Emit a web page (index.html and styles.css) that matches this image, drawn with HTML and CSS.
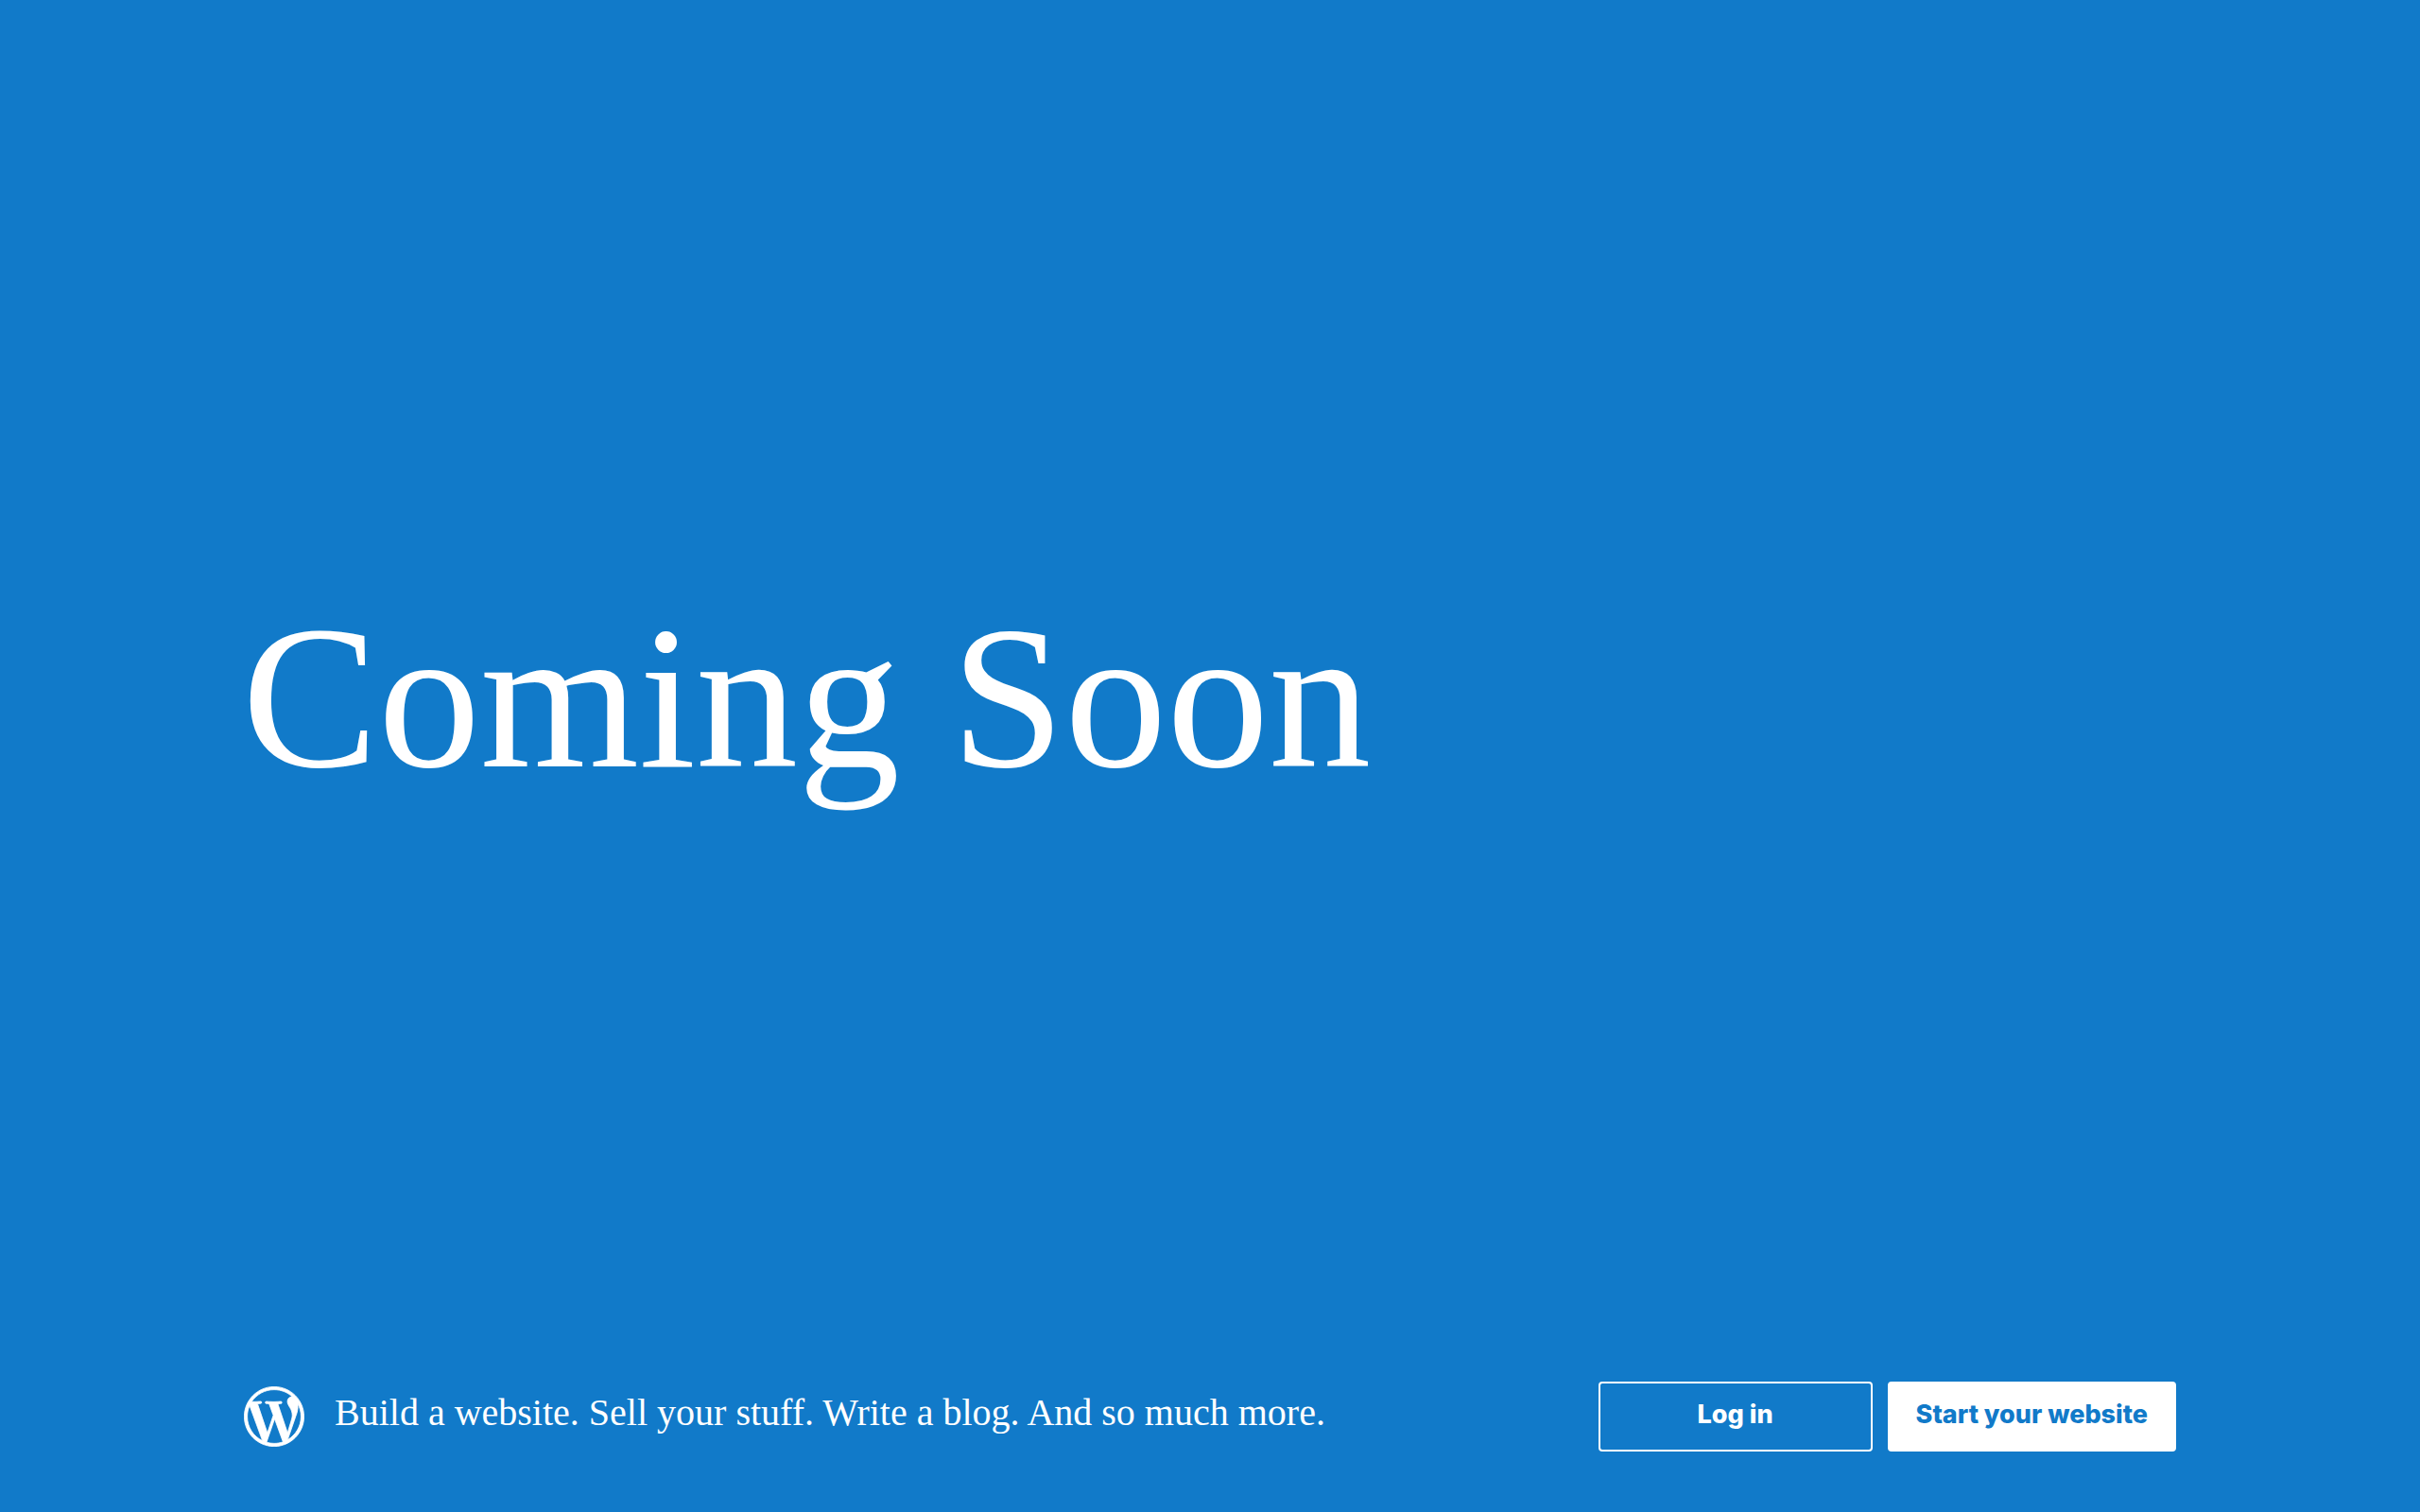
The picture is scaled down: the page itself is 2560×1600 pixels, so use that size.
FILE: index.html
```html
<!DOCTYPE html>
<html lang="en">
<head>
    <meta charset="UTF-8">
    <meta name="viewport" content="width=device-width, initial-scale=1.0">
    <title>Coming Soon</title>
    <link rel="stylesheet" href="styles.css">
</head>
<body>
    <main class="content">
        <h1 class="title">Coming Soon</h1>
    </main>
    <footer class="footer">
        <div class="intro">
            <svg class="logo" viewBox="-0.15 -0.15 24.3 24.3" role="img" aria-label="WordPress">
                <path d="M21.469 6.825c.84 1.537 1.318 3.3 1.318 5.175 0 3.979-2.156 7.456-5.363 9.325l3.295-9.527c.615-1.54.82-2.771.82-3.864 0-.405-.026-.78-.07-1.11m-7.981.105c.647-.03 1.232-.105 1.232-.105.582-.075.514-.93-.067-.899 0 0-1.755.135-2.88.135-1.064 0-2.85-.15-2.85-.15-.585-.03-.661.855-.075.885 0 0 .54.061 1.125.09l1.68 4.605-2.37 7.08L5.354 6.9c.649-.03 1.234-.1 1.234-.1.585-.075.516-.93-.065-.896 0 0-1.746.138-2.874.138-.2 0-.438-.008-.69-.015C4.911 3.15 8.235 1.215 12 1.215c2.809 0 5.365 1.072 7.286 2.833-.046-.003-.091-.009-.141-.009-1.06 0-1.812.923-1.812 1.914 0 .89.513 1.643 1.06 2.531.411.72.89 1.643.89 2.977 0 .915-.354 1.994-.821 3.479l-1.075 3.585-3.9-11.61.001.014zM12 22.784c-1.059 0-2.081-.153-3.048-.437l3.237-9.406 3.315 9.087c.024.053.05.101.078.149-1.12.393-2.325.609-3.582.609M1.211 12c0-1.564.336-3.05.935-4.39L7.29 21.709C3.694 19.96 1.212 16.271 1.211 12M12 0C5.385 0 0 5.385 0 12s5.385 12 12 12 12-5.385 12-12S18.615 0 12 0"/>
            </svg>
            <p class="tagline">Build a website. Sell your stuff. Write a blog. And so much more.</p>
        </div>
        <nav class="actions">
            <a class="button" href="#login">Log in</a>
            <a class="button button-primary" href="#start">Start your website</a>
        </nav>
    </footer>
</body>
</html>
```
FILE: styles.css
```css
* {
    box-sizing: border-box;
}
body {
    display: flex;
    flex-direction: column;
    min-height: 100vh;
    margin: 0;
    padding: 0 10%;
    background-color: #117ac9;
    color: #fff;
    font-family: "Liberation Serif", "Times New Roman", serif;
}
.content {
    display: flex;
    flex: 1;
    align-items: center;
    padding-top: 16px;
}
.title {
    margin: 0;
    font-size: 216px;
    font-weight: normal;
    line-height: 240px;
}
.footer {
    display: flex;
    flex-wrap: wrap;
    justify-content: space-between;
    align-items: center;
    gap: 32px;
    padding: 0 2px 64px;
}
.intro {
    display: flex;
    align-items: center;
    gap: 32px;
}
.logo {
    flex: none;
    width: 64px;
    height: 64px;
    fill: currentColor;
    stroke: currentColor;
    stroke-width: 0.3;
}
.tagline {
    margin: 0;
    padding-bottom: 8px;
    font-size: 40px;
    line-height: 48px;
}
.actions {
    display: flex;
    gap: 16px;
}
.button {
    min-width: 290px;
    padding: 17px 28px 21px;
    border: 2px solid #fff;
    border-radius: 4px;
    color: #fff;
    font-family: Inter, sans-serif;
    font-size: 27px;
    font-weight: 800;
    line-height: 32px;
    text-align: center;
    text-decoration: none;
}
.button-primary {
    background-color: #fff;
    color: #117ac9;
}
```
